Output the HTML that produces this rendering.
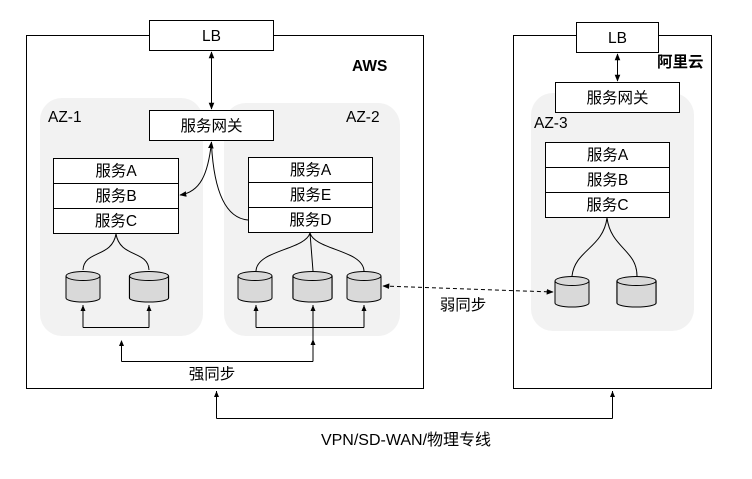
<!DOCTYPE html>
<html><head><meta charset="utf-8"><style>
html,body{margin:0;padding:0;background:#fff;}
svg{display:block;}
text{font-family:"Liberation Sans","Noto Sans CJK SC",sans-serif;font-size:15.5px;fill:#000;}
</style></head><body>
<svg width="752" height="479" viewBox="0 0 752 479" xmlns="http://www.w3.org/2000/svg">
<defs>
<marker id="a" viewBox="0 0 10 10" refX="9" refY="5" markerWidth="7" markerHeight="7" orient="auto-start-reverse"><path d="M0,1 L10,5 L0,9 Z" fill="#000"/></marker>
<g id="cyl"><path d="M-17,-25 V-3 A17,4 0 0 0 17,-3 V-25" fill="#d9d9d9" stroke="#000"/><ellipse cx="0" cy="-25" rx="17" ry="4.5" fill="#d9d9d9" stroke="#000"/></g>
</defs>
<g fill="none" stroke="#000" stroke-width="1">
<rect x="26.5" y="35.5" width="397" height="353" fill="#fff"/>
<rect x="513.5" y="35.5" width="198" height="353" fill="#fff"/>
</g>
<rect x="40" y="98" width="163" height="238" rx="22" fill="#f2f2f2"/>
<rect x="224" y="103" width="176" height="233" rx="22" fill="#f2f2f2"/>
<rect x="531" y="93" width="163" height="238" rx="22" fill="#f2f2f2"/>
<g fill="#fff" stroke="#000">
<rect x="149.5" y="20.5" width="124" height="30"/>
<rect x="149.5" y="110.5" width="124" height="30"/>
<rect x="576.5" y="22.5" width="82" height="30"/>
<rect x="555.5" y="82.5" width="124" height="30"/>
<rect x="53.5" y="158.5" width="125" height="25"/><rect x="53.5" y="183.5" width="125" height="25"/><rect x="53.5" y="208.5" width="125" height="25"/>
<rect x="248.5" y="157.5" width="124" height="25"/><rect x="248.5" y="182.5" width="124" height="25"/><rect x="248.5" y="207.5" width="124" height="25"/>
<rect x="545.5" y="142.5" width="124" height="25"/><rect x="545.5" y="167.5" width="124" height="25"/><rect x="545.5" y="192.5" width="124" height="25"/>
</g>
<g fill="none" stroke="#000" stroke-width="1">
<line x1="211.5" y1="52" x2="211.5" y2="109" marker-start="url(#a)" marker-end="url(#a)"/>
<line x1="617.5" y1="54" x2="617.5" y2="81" marker-start="url(#a)" marker-end="url(#a)"/>
<path d="M211.5,142 C208,175 200,192 180,195" marker-start="url(#a)" marker-end="url(#a)"/>
<path d="M248,220 C225,218 214,190 211.5,145"/>
<path d="M116,234 C112,258 84,250 83,270 M116,234 C120,258 148,250 149,270"/>
<path d="M310,233 C305,250 257,250 256,271 M310,233 L313,271 M310,233 C315,250 363,250 364,271"/>
<path d="M607,218 C603,248 575,250 572,276 M607,218 C611,248 637,250 637,276"/>
<path d="M83,327.5 H149 M83,327.5 V305 M149,327.5 V305" />
<path d="M256,327.5 H364 M256,327.5 V305 M364,327.5 V305 M313,361.5 V305"/>
<path d="M121.5,361.5 H313 M121.5,361.5 V342"/>
<path d="M216.5,418.5 H612.5 M216.5,418.5 V391 M612.5,418.5 V391"/>
<line x1="383" y1="286" x2="553" y2="292" stroke-dasharray="4,3" marker-start="url(#a)" marker-end="url(#a)"/>
</g>
<g fill="#000">
<path d="M83,305 l-2.5,6 h5z M149,305 l-2.5,6 h5z M256,305 l-2.5,6 h5z M313,305 l-2.5,6 h5z M364,305 l-2.5,6 h5z M121.5,340 l-2.5,6 h5z M313,339 l-2.5,6 h5z M216.5,391 l-2.5,6 h5z M612.5,391 l-2.5,6 h5z"/>
</g>
<use href="#cyl" x="83" y="301"/>
<use href="#cyl" x="149" y="301" transform="translate(149,301) scale(1.15,1) translate(-149,-301)"/>
<use href="#cyl" x="255" y="301"/>
<use href="#cyl" x="312.5" y="301" transform="translate(312.5,301) scale(1.15,1) translate(-312.5,-301)"/>
<use href="#cyl" x="364" y="301"/>
<use href="#cyl" x="572" y="306"/>
<use href="#cyl" x="636.5" y="306" transform="translate(636.5,306) scale(1.15,1) translate(-636.5,-306)"/>
<g text-anchor="middle">
<text x="211.5" y="41">LB</text>
<text x="211.5" y="131">服务网关</text>
<text x="617.5" y="43">LB</text>
<text x="617.5" y="103">服务网关</text>
<text x="116" y="176">服务A</text><text x="116" y="201">服务B</text><text x="116" y="226">服务C</text>
<text x="310.5" y="175">服务A</text><text x="310.5" y="200">服务E</text><text x="310.5" y="225">服务D</text>
<text x="607.5" y="160">服务A</text><text x="607.5" y="185">服务B</text><text x="607.5" y="210">服务C</text>
<text x="212" y="379">强同步</text>
<text x="463" y="310">弱同步</text>
<text x="406" y="445" style="font-size:16px">VPN/SD-WAN/物理专线</text>
</g>
<text x="48" y="122">AZ-1</text>
<text x="346" y="122">AZ-2</text>
<text x="534" y="128">AZ-3</text>
<text x="352" y="71" font-weight="bold">AWS</text>
<text x="657" y="67" font-weight="bold">阿里云</text>
</svg>
</body></html>
